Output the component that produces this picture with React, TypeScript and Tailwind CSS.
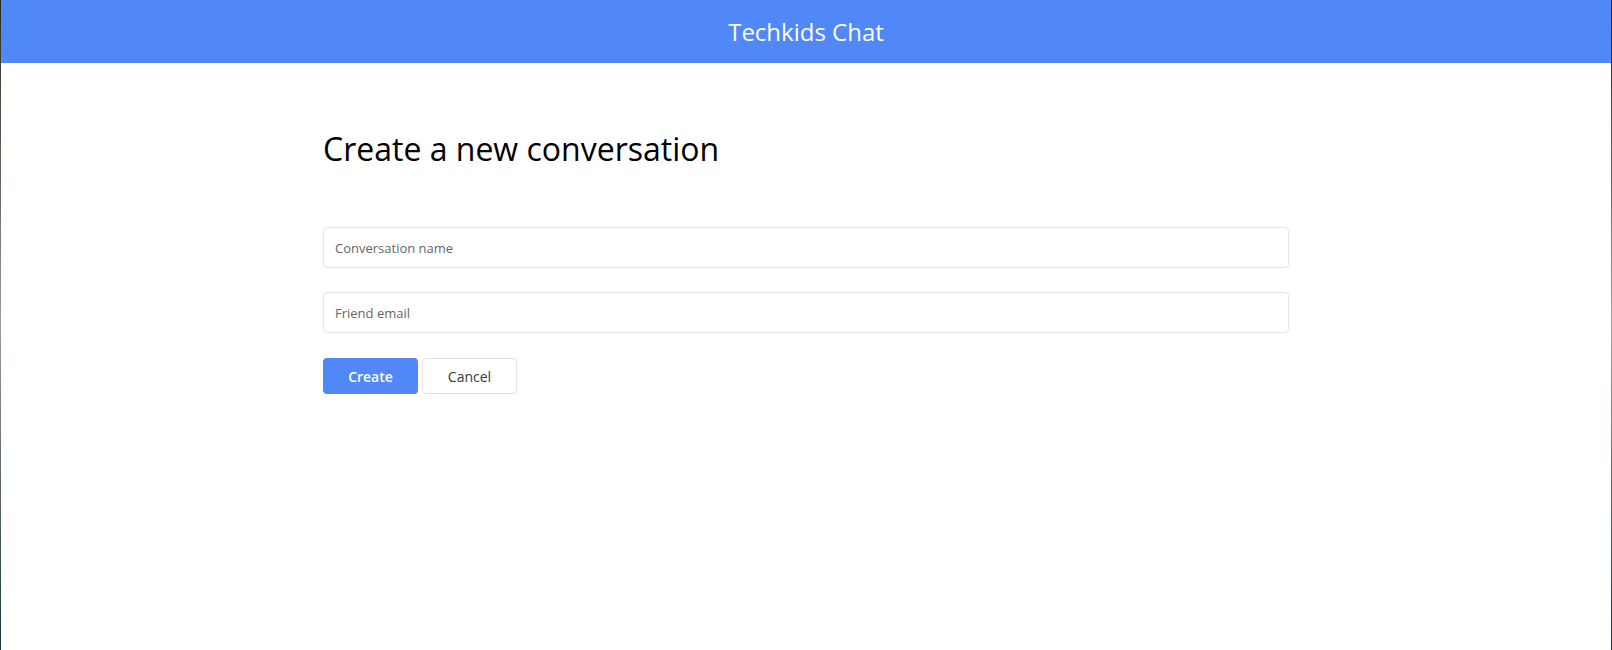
import React from "react";

export default function App() {
  return (
    <div
      className="flex h-[650px] w-full bg-white"
      style={{ fontFamily: '"Open Sans", "Noto Sans", sans-serif' }}
    >
      <div className="w-px shrink-0 bg-gradient-to-b from-[#26301f] via-[#9a9e9c] to-[#1c3540]" />
      <div className="flex min-w-0 flex-1 flex-col">
        <header className="flex h-[63px] shrink-0 items-center justify-center bg-[#5088f7]">
          <h1 className="text-[24px] font-medium leading-[32px] text-white">Techkids Chat</h1>
        </header>
        <main className="mx-auto w-[60%] pt-[64px]">
          <h2 className="text-[32px] leading-[44px] text-black">Create a new conversation</h2>
          <form
            className="mt-[56px] flex flex-col"
            onSubmit={(e) => e.preventDefault()}
          >
            <input
              type="text"
              placeholder="Conversation name"
              className="h-[41px] w-full rounded-[4px] border border-[#e3e3e3] px-[11px] text-[13px] text-[#333] outline-none placeholder:text-[#666]"
            />
            <input
              type="email"
              placeholder="Friend email"
              className="mt-[24px] h-[41px] w-full rounded-[4px] border border-[#e3e3e3] px-[11px] text-[13px] text-[#333] outline-none placeholder:text-[#666]"
            />
            <div className="mt-[25px] flex gap-[4px]">
              <button
                type="submit"
                className="h-[36px] w-[95px] rounded-[4px] bg-[#5088f7] text-[14px] font-semibold text-white"
              >
                Create
              </button>
              <button
                type="button"
                className="h-[36px] w-[95px] rounded-[4px] border border-[#e3e3e3] bg-white text-[14px] text-[#3a3a3a]"
              >
                Cancel
              </button>
            </div>
          </form>
        </main>
      </div>
      <div className="w-px shrink-0 bg-gradient-to-b from-[#1f261c] via-[#a3a7a6] to-[#26343a]" />
    </div>
  );
}
